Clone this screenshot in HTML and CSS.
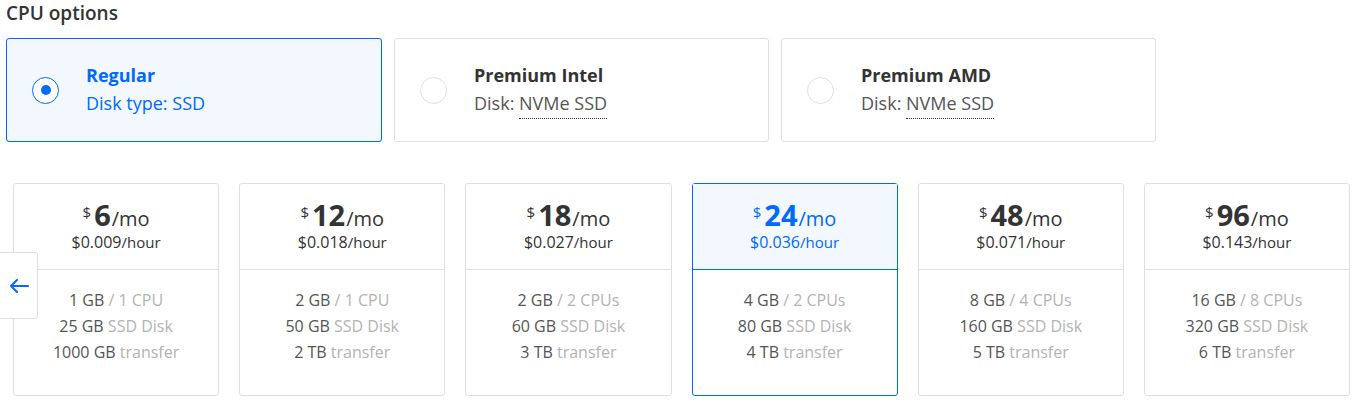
FILE: index.html
```html
<!DOCTYPE html>
<html>
<head>
<meta charset="utf-8">
<link rel="stylesheet" href="styles.css">
</head>
<body>
<div class="page">
  <h2 class="heading">CPU options</h2>
  <div class="options">
    <div class="option selected">
      <span class="radio"><span class="dot"></span></span>
      <div class="option-text">
        <div class="option-title">Regular</div>
        <div class="option-sub">Disk type: SSD</div>
      </div>
    </div>
    <div class="option">
      <span class="radio"></span>
      <div class="option-text">
        <div class="option-title">Premium Intel</div>
        <div class="option-sub">Disk: <span class="dotted">NVMe SSD</span></div>
      </div>
    </div>
    <div class="option">
      <span class="radio"></span>
      <div class="option-text">
        <div class="option-title">Premium AMD</div>
        <div class="option-sub">Disk: <span class="dotted">NVMe SSD</span></div>
      </div>
    </div>
  </div>

  <div class="plans-wrap">
    <button class="arrow" aria-label="Previous">
      <svg width="20" height="14" viewBox="0 0 20 14"><path d="M19 7H2M8 1L2 7l6 6" fill="none" stroke="#0069ff" stroke-width="2" stroke-linecap="round" stroke-linejoin="round"/></svg>
    </button>
    <div class="plans">
      <div class="plan">
        <div class="plan-head">
          <div class="price"><span class="cur">$</span><span class="amt">6</span><span class="per">/mo</span></div>
          <div class="hour">$0.009<span class="hr">/hour</span></div>
        </div>
        <div class="plan-body">
          <div>1 GB <span class="lt">/ 1 CPU</span></div>
          <div>25 GB <span class="lt">SSD Disk</span></div>
          <div>1000 GB <span class="lt">transfer</span></div>
        </div>
      </div>
      <div class="plan">
        <div class="plan-head">
          <div class="price"><span class="cur">$</span><span class="amt">12</span><span class="per">/mo</span></div>
          <div class="hour">$0.018<span class="hr">/hour</span></div>
        </div>
        <div class="plan-body">
          <div>2 GB <span class="lt">/ 1 CPU</span></div>
          <div>50 GB <span class="lt">SSD Disk</span></div>
          <div>2 TB <span class="lt">transfer</span></div>
        </div>
      </div>
      <div class="plan">
        <div class="plan-head">
          <div class="price"><span class="cur">$</span><span class="amt">18</span><span class="per">/mo</span></div>
          <div class="hour">$0.027<span class="hr">/hour</span></div>
        </div>
        <div class="plan-body">
          <div>2 GB <span class="lt">/ 2 CPUs</span></div>
          <div>60 GB <span class="lt">SSD Disk</span></div>
          <div>3 TB <span class="lt">transfer</span></div>
        </div>
      </div>
      <div class="plan selected">
        <div class="plan-head">
          <div class="price"><span class="cur">$</span><span class="amt">24</span><span class="per">/mo</span></div>
          <div class="hour">$0.036<span class="hr">/hour</span></div>
        </div>
        <div class="plan-body">
          <div>4 GB <span class="lt">/ 2 CPUs</span></div>
          <div>80 GB <span class="lt">SSD Disk</span></div>
          <div>4 TB <span class="lt">transfer</span></div>
        </div>
      </div>
      <div class="plan">
        <div class="plan-head">
          <div class="price"><span class="cur">$</span><span class="amt">48</span><span class="per">/mo</span></div>
          <div class="hour">$0.071<span class="hr">/hour</span></div>
        </div>
        <div class="plan-body">
          <div>8 GB <span class="lt">/ 4 CPUs</span></div>
          <div>160 GB <span class="lt">SSD Disk</span></div>
          <div>5 TB <span class="lt">transfer</span></div>
        </div>
      </div>
      <div class="plan">
        <div class="plan-head">
          <div class="price"><span class="cur">$</span><span class="amt">96</span><span class="per">/mo</span></div>
          <div class="hour">$0.143<span class="hr">/hour</span></div>
        </div>
        <div class="plan-body">
          <div>16 GB <span class="lt">/ 8 CPUs</span></div>
          <div>320 GB <span class="lt">SSD Disk</span></div>
          <div>6 TB <span class="lt">transfer</span></div>
        </div>
      </div>
    </div>
  </div>
</div>
</body>
</html>
```
FILE: styles.css
```css
* { box-sizing: border-box; }
html, body { margin: 0; padding: 0; background: #fff; }
body { font-family: "Open Sans", Lato, sans-serif; color: #333; }
.page { width: 1355px; height: 401px; overflow: hidden; }

.heading {
  margin: 0;
  padding: 0 0 0 6px;
  height: 38px;
  font-size: 19px;
  font-weight: 600;
  color: #333;
  line-height: 26px;
}

.options {
  display: flex;
  gap: 12px;
  padding-left: 6px;
}
.option {
  width: 375px;
  height: 104px;
  border: 1px solid #dfdfdf;
  border-radius: 3px;
  display: flex;
  align-items: center;
  padding-left: 25px;
  background: #fff;
}
.option.selected {
  width: 376px;
  border-color: #0069ff;
  background: #f3f8ff;
}
.radio {
  width: 27px;
  height: 27px;
  border-radius: 50%;
  border: 1px solid #dfdfdf;
  background: #fff;
  display: flex;
  align-items: center;
  justify-content: center;
  flex: none;
}
.option.selected .radio { border-color: #0069ff; }
.dot { width: 10px; height: 10px; border-radius: 50%; background: #0069ff; }
.option-text { margin-left: 27px; margin-top: -2px; }
.option-title {
  font-size: 18px;
  font-weight: 700;
  color: #333;
  line-height: 22px;
}
.option-sub {
  margin-top: 6px;
  font-size: 18px;
  color: #555;
  line-height: 22px;
}
.option.selected .option-title,
.option.selected .option-sub { color: #0069ff; }
.dotted { border-bottom: 1px dotted #333; padding-bottom: 3px; }

.plans-wrap {
  position: relative;
  margin-top: 41px;
  padding-left: 13px;
  padding-right: 5px;
}
.plans {
  display: grid;
  grid-template-columns: repeat(6, 1fr);
  gap: 20px;
}
.plan {
  height: 213px;
  border: 1px solid #dfdfdf;
  border-radius: 3px;
  text-align: center;
  background: #fff;
}
.plan.selected { border-color: #0069ff; }
.plan-head {
  height: 86px;
  border-bottom: 1px solid #dfdfdf;
  padding-top: 16px;
  color: #333;
}
.plan.selected .plan-head {
  background: #f3f8ff;
  border-bottom-color: #0069ff;
  color: #0069ff;
}
.price { line-height: 30px; height: 30px; white-space: nowrap; }
.cur { font-size: 15px; line-height: 10px; vertical-align: 8px; margin-right: 3px; }
.amt { font-size: 29px; font-weight: 700; }
.per { font-size: 20px; margin-left: 1px; }
.hour { margin-top: 3px; font-size: 16px; line-height: 18px; white-space: nowrap; }
.hr { font-size: 15px; }
.plan-body {
  padding-top: 17px;
  font-size: 16px;
  line-height: 26px;
  color: #555;
}
.lt { color: #b3b3b3; }

.arrow {
  position: absolute;
  left: 0;
  top: 69px;
  width: 38px;
  height: 67px;
  border: 1px solid #dfdfdf;
  border-left: none;
  border-radius: 0 3px 3px 0;
  background: #fff;
  display: flex;
  align-items: center;
  justify-content: center;
  padding: 0;
}
```
